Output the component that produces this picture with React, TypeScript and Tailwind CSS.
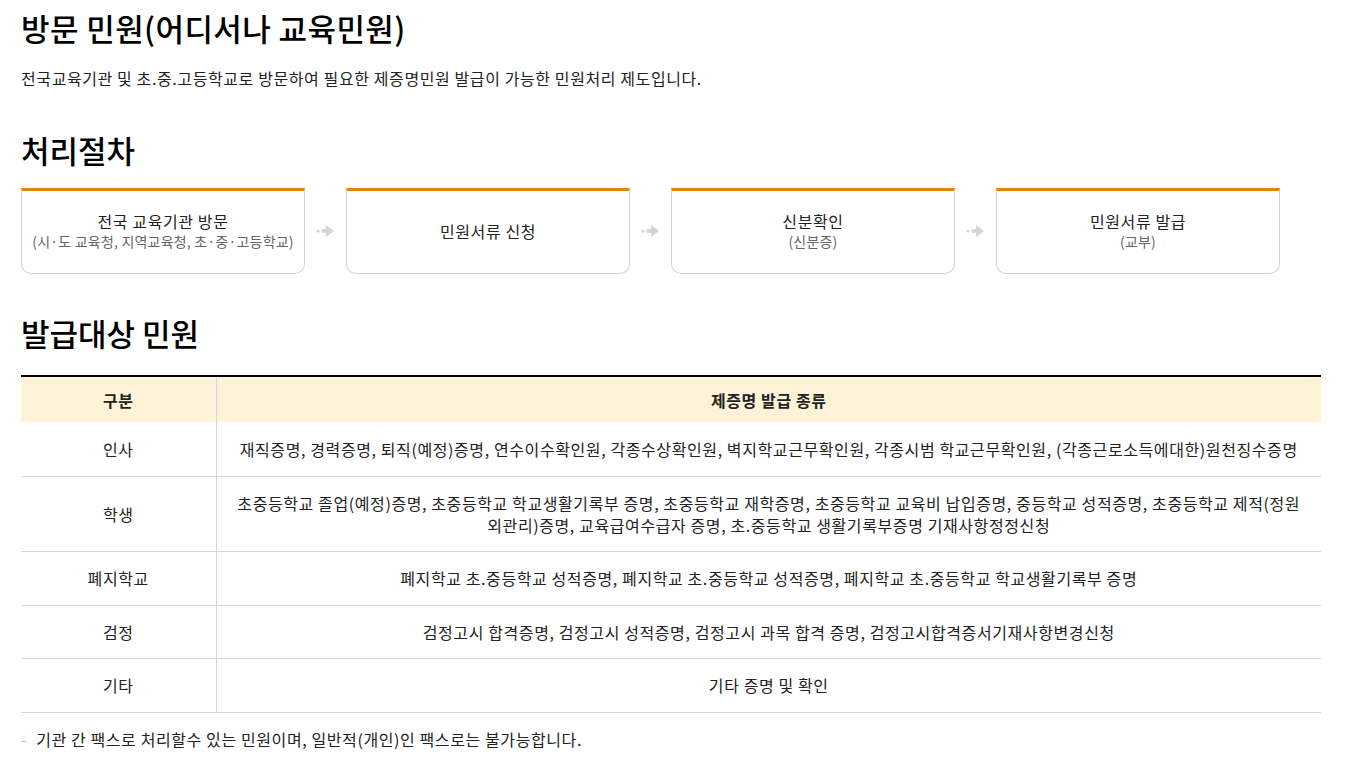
import React from 'react';

const steps = [
  { title: '전국 교육기관 방문', sub: '(시·도 교육청, 지역교육청, 초·중·고등학교)' },
  { title: '민원서류 신청' },
  { title: '신분확인', sub: '(신분증)' },
  { title: '민원서류 발급', sub: '(교부)' },
];

const rows = [
  {
    label: '인사',
    text: '재직증명, 경력증명, 퇴직(예정)증명, 연수이수확인원, 각종수상확인원, 벽지학교근무확인원, 각종시범 학교근무확인원, (각종근로소득에대한)원천징수증명',
    h: 'h-[54px]',
  },
  {
    label: '학생',
    text: '초중등학교 졸업(예정)증명, 초중등학교 학교생활기록부 증명, 초중등학교 재학증명, 초중등학교 교육비 납입증명, 중등학교 성적증명, 초중등학교 제적(정원외관리)증명, 교육급여수급자 증명, 초.중등학교 생활기록부증명 기재사항정정신청',
    h: 'h-[75px]',
  },
  { label: '폐지학교', text: '폐지학교 초.중등학교 성적증명, 폐지학교 초.중등학교 성적증명, 폐지학교 초.중등학교 학교생활기록부 증명', h: 'h-[54px]' },
  { label: '검정', text: '검정고시 합격증명, 검정고시 성적증명, 검정고시 과목 합격 증명, 검정고시합격증서기재사항변경신청', h: 'h-[53px]' },
  { label: '기타', text: '기타 증명 및 확인', h: 'h-[54px]' },
];

const Arrow = () => (
  <div className="flex w-[41px] shrink-0 items-center justify-center">
    <svg width="22" height="14" viewBox="0 0 22 14">
      <circle cx="3" cy="7" r="1.6" fill="#d4d4d4" />
      <rect x="6.5" y="5.2" width="6" height="3.6" fill="#d4d4d4" />
      <path d="M11 1 L19 7 L11 13 Z" fill="#d4d4d4" />
    </svg>
  </div>
);

export default function App() {
  return (
    <div
      className="min-h-screen bg-white px-[21px] pt-[7px] text-[#222]"
      style={{ fontFamily: '"Noto Sans CJK KR", "Noto Sans", sans-serif' }}
    >
      <h1 className="text-[31px] font-medium leading-[42px] tracking-[0.4px] text-black">방문 민원(어디서나 교육민원)</h1>
      <p className="mt-[18px] text-[16px] leading-[22px] tracking-[0.6px] text-[#222]">
        전국교육기관 및 초.중.고등학교로 방문하여 필요한 제증명민원 발급이 가능한 민원처리 제도입니다.
      </p>

      <h2 className="mt-[40px] text-[31px] font-medium leading-[42px] text-black">처리절차</h2>
      <div className="mt-[17px] flex">
        {steps.map((s, i) => (
          <React.Fragment key={s.title}>
            {i > 0 && <Arrow />}
            <div className="flex h-[86px] w-[284px] flex-col items-center justify-center rounded-b-[10px] border border-t-[3px] border-[#d2d2d8] border-t-[#e08600] pb-[3px] text-center">
              <div className="text-[16px] leading-[22px] tracking-[0.6px] text-[#222]">{s.title}</div>
              {s.sub && <div className="text-[14px] leading-[19px] tracking-[0.2px] text-[#666]">{s.sub}</div>}
            </div>
          </React.Fragment>
        ))}
      </div>

      <h2 className="mt-[38px] text-[31px] font-medium leading-[42px] text-black">발급대상 민원</h2>
      <table className="mt-[21px] w-[1300px] border-collapse border-t-2 border-black text-[16px] tracking-[0.6px]">
        <thead>
          <tr className="h-[46px] bg-[#fef3d9]">
            <th className="w-[195px] border-r border-[#d5d5dc] font-bold">구분</th>
            <th className="font-bold">제증명 발급 종류</th>
          </tr>
        </thead>
        <tbody>
          {rows.map((r) => (
            <tr key={r.label} className={`${r.h} border-b border-[#d5d5dc]`}>
              <td className="border-r border-[#d5d5dc] text-center">{r.label}</td>
              <td className="px-[17px] text-center leading-[22px]">{r.text}</td>
            </tr>
          ))}
        </tbody>
      </table>
      <p className="mt-[14px] flex items-center text-[16px] tracking-[0.6px] text-[#222]">
        <span className="mr-[9px] text-[#bbb]">-</span>
        기관 간 팩스로 처리할수 있는 민원이며, 일반적(개인)인 팩스로는 불가능합니다.
      </p>
    </div>
  );
}
